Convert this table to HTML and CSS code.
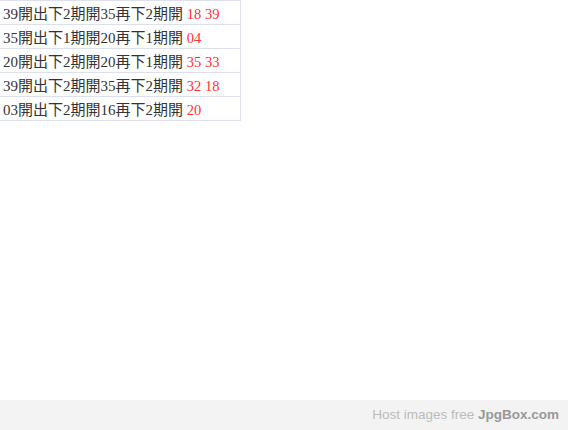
FILE: index.html
```html
<!DOCTYPE html>
<html lang="zh-Hant">
<head>
    <meta charset="UTF-8">
    <title>開出下期</title>
    <link rel="stylesheet" href="styles.css">
</head>
<body>
    <table class="lista">
        <tr><td>39開出下2期開35再下2期開 <span class="num">18 39</span></td></tr>
        <tr><td>35開出下1期開20再下1期開 <span class="num">04</span></td></tr>
        <tr><td>20開出下2期開20再下1期開 <span class="num">35 33</span></td></tr>
        <tr><td>39開出下2期開35再下2期開 <span class="num">32 18</span></td></tr>
        <tr><td>03開出下2期開16再下2期開 <span class="num">20</span></td></tr>
    </table>
    <div class="footer">
        Host images free <b>JpgBox.com</b>
    </div>
</body>
</html>
```

FILE: styles.css
```css
html, body {
    height: 100%;
}
body {
    margin: 0;
    display: flex;
    flex-direction: column;
    font-family: "Liberation Serif", "Noto Sans CJK TC", serif;
}
.lista {
    border-collapse: collapse;
    width: 241px;
}
.lista td {
    border: 1px solid #dde0ee;
    border-left: none;
    height: 23px;
    padding: 0 0 0 3px;
    font-size: 15px;
    color: #333;
    white-space: nowrap;
}
.num {
    color: #ff3333;
    font-size: 14.5px;
}
.footer {
    margin-top: auto;
    height: 30px;
    background-color: #f3f3f3;
    color: #bbb;
    font-family: "Liberation Sans", Arial, sans-serif;
    font-size: 13.5px;
    line-height: 30px;
    text-align: right;
    padding-right: 9px;
}
.footer b {
    color: #999;
}
```
